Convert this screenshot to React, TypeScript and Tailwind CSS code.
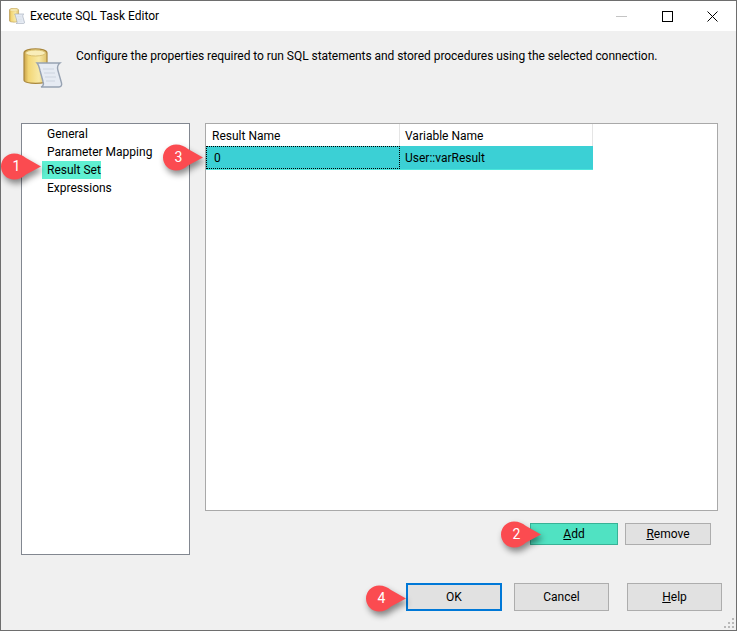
function DbIcon({ size }: { size: number }) {
  return (
    <svg width={size} height={size} viewBox="0 0 40 40" className="shrink-0">
      <defs>
        <linearGradient id={`can${size}`} x1="0" x2="1" y1="0" y2="0">
          <stop offset="0" stopColor="#c9a24a" />
          <stop offset="0.2" stopColor="#f2d675" />
          <stop offset="0.65" stopColor="#f8e9a6" />
          <stop offset="1" stopColor="#e0c26a" />
        </linearGradient>
      </defs>
      <path d="M1 5C1-.5 24-.5 24 5v27c0 4.500-23 4.500-23 0z" fill={`url(#can${size})`} stroke="#a9873c" strokeWidth="1.200" />
      <ellipse cx="12.500" cy="5" rx="10" ry="3" fill="#f9edb9" stroke="#d1b565" strokeWidth="0.800" />
      <path d="M14 15h23c-2.500 2-3 4-2.200 7l3.700 13c.6 2.500-.5 4-2.500 4H18c2.300-.8 2.800-3 2-5.500l-3-11c-.6-2.500-1.500-6-3-7.500z" fill="#e6ebf3" stroke="#97a2b2" strokeWidth="1.400" />
      <path d="M20 21h11M21 25h11M22 29h11M23 33h9" stroke="#cdd4df" strokeWidth="1" />
    </svg>
  );
}

function Callout({ n, className }: { n: string; className: string }) {
  return (
    <div className={`absolute w-[40px] h-[27px] ${className}`}>
      <svg width="40" height="27" viewBox="0 0 40 27" className="absolute inset-0 overflow-visible drop-shadow-[2px_4px_3px_rgba(0,0,0,0.45)]">
        <path d="M13 0.500C18 0.500 21 2 25 5L40 13.500 25 21.500C21 25 18 26.500 13 26.500A13 13 0 0 1 13 .500Z" fill="#fb4b50" />
      </svg>
      <span className="absolute left-0 top-0 w-[31px] h-[27px] flex items-center justify-center text-white text-[14px]">{n}</span>
    </div>
  );
}

function Btn({ className, children }: { className: string; children: React.ReactNode }) {
  return (
    <button className={`flex items-center justify-center border-2 border-[#adadad] bg-[#e1e1e1] text-black text-[12px] ${className}`}>
      {children}
    </button>
  );
}

export default function App() {
  return (
    <div className="relative w-[737px] h-[631px] flex flex-col bg-[#f0f0f0] border border-[#6e6e6e] font-['Roboto',sans-serif] text-[12px] text-black overflow-hidden">
      <div className="h-[30px] bg-white flex items-center shrink-0">
        <div className="ml-[8px] mr-[5px]">
          <DbIcon size={16} />
        </div>
        <span className="text-[12px]">Execute SQL Task Editor</span>
        <div className="ml-auto flex items-center text-black">
          <svg width="11" height="10" viewBox="0 0 11 10" className="mr-[35px]">
            <path d="M0 5.500h11" stroke="#c4c4c4" strokeWidth="1" />
          </svg>
          <svg width="11" height="11" viewBox="0 0 11 11" className="mr-[34px]">
            <rect x="0.500" y="0.500" width="10" height="10" fill="none" stroke="#000" strokeWidth="1" />
          </svg>
          <svg width="11" height="11" viewBox="0 0 11 11" className="mr-[18px]">
            <path d="M0.500 0.500l10 10M10.500 0.500l-10 10" stroke="#000" strokeWidth="1" />
          </svg>
        </div>
      </div>

      <div className="h-[92px] flex shrink-0">
        <div className="ml-[22px] mt-[17px]">
          <DbIcon size={40} />
        </div>
        <p className="ml-[13px] mt-[16px] whitespace-nowrap tracking-[-0.05px]">Configure the properties required to run SQL statements and stored procedures using the selected connection.</p>
      </div>

      <div className="flex ml-[20px] items-start">
        <div className="w-[169px] h-[432px] bg-white border border-[#828790] pt-[1px] pl-[25px] leading-[18px]">
          <div>General</div>
          <div>Parameter Mapping</div>
          <div className="-ml-[5px] pl-[5px] w-[59px] h-[18px] bg-[#5ff0d2] whitespace-nowrap">Result Set</div>
          <div>Expressions</div>
        </div>

        <div className="ml-[15px] flex flex-col items-end">
          <div className="w-[513px] h-[388px] bg-white border border-[#a9a9a9]">
            <div className="flex h-[22px]">
              <div className="w-[194px] pl-[6px] pt-[1px] border-r border-[#e5e5e5] flex items-center">Result Name</div>
              <div className="w-[193px] pl-[5px] pt-[1px] border-r border-[#e5e5e5] flex items-center">Variable Name</div>
            </div>
            <div className="flex h-[24px] w-[387px] bg-[#3bd0d5] border-b border-[#4ce6dc]">
              <div className="w-[194px] pl-[7px] flex items-center border border-dotted border-black">0</div>
              <div className="flex-1 pl-[5px] flex items-center">User::varResult</div>
            </div>
          </div>

          <div className="flex mt-[12px] gap-[7px] mr-[7px]">
            <Btn className="w-[88px] h-[22px] !bg-[#50e2c2] !border-[#38b296] !border">
              <span><span className="underline">A</span>dd</span>
            </Btn>
            <Btn className="w-[86px] h-[22px] !border">
              <span><span className="underline">R</span>emove</span>
            </Btn>
          </div>
        </div>
      </div>

      <div className="flex mt-[28px] ml-[405px] gap-[12px]">
        <Btn className="w-[96px] h-[28px] !border-[#0078d7]">OK</Btn>
        <Btn className="w-[95px] h-[28px] !border">Cancel</Btn>
        <Btn className="w-[95px] h-[28px] !border ml-[6px]">
          <span><span className="underline">H</span>elp</span>
        </Btn>
      </div>

      <svg width="11" height="11" viewBox="0 0 11 11" className="absolute right-[1px] bottom-[1px]" fill="#b9b9b9">
        <rect x="8" y="0" width="2" height="2" />
        <rect x="4" y="4" width="2" height="2" />
        <rect x="8" y="4" width="2" height="2" />
        <rect x="0" y="8" width="2" height="2" />
        <rect x="4" y="8" width="2" height="2" />
        <rect x="8" y="8" width="2" height="2" />
      </svg>

      <Callout n="1" className="left-0 top-[152px]" />
      <Callout n="3" className="left-[162px] top-[143px]" />
      <Callout n="2" className="left-[500px] top-[520px]" />
      <Callout n="4" className="left-[365px] top-[584px]" />
    </div>
  );
}
